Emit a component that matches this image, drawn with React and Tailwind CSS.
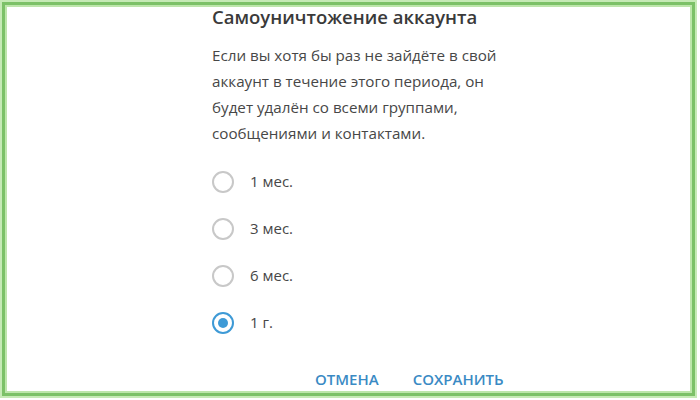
import React from 'react';

const options = [
  { label: '1 мес.', checked: false },
  { label: '3 мес.', checked: false },
  { label: '6 мес.', checked: false },
  { label: '1 г.', checked: true },
];

const Radio = ({ checked }) => (
  <div
    className={`w-[22px] h-[22px] rounded-full border-2 flex items-center justify-center shrink-0 ${
      checked ? 'border-[#3e9ad6]' : 'border-[#c8c8c8]'
    }`}
  >
    {checked && <div className="w-[10px] h-[10px] rounded-full bg-[#3e9ad6]" />}
  </div>
);

export default function App() {
  return (
    <div className="w-[700px] h-[400px] bg-white overflow-hidden" style={{ fontFamily: '"Open Sans", "Liberation Sans", sans-serif' }}>
      {/* Green frame */}
      <div className="w-[697px] h-[398px] bg-[#c6eab6] p-[2px]">
        <div className="w-full h-full bg-[#7cc168] p-[3px]">
          <div className="w-full h-full bg-[#bde6ab] p-[2px]">
            <div className="w-full h-full bg-white pl-[205px]">
              <div className="text-[18.5px] leading-[20px] font-semibold text-[#3a3a3a] whitespace-nowrap">
                Самоуничтожение аккаунта
              </div>
              <p className="mt-[15px] text-[15.2px] leading-[26px] text-[#474747] whitespace-nowrap">
                Если вы хотя бы раз не зайдёте в свой<br />
                аккаунт в течение этого периода, он<br />
                будет удалён со всеми группами,<br />
                сообщениями и контактами.
              </p>
              <div className="mt-[12px] flex flex-col">
                {options.map((o) => (
                  <div key={o.label} className="h-[47px] flex items-center gap-[16px]">
                    <Radio checked={o.checked} />
                    <span className="text-[15px] text-[#474747]">{o.label}</span>
                  </div>
                ))}
              </div>
              <div className="mt-[23px] pl-[103px] flex gap-[34px] text-[15px] leading-[20px] font-semibold text-[#3a8ac4]">
                <span>ОТМЕНА</span>
                <span>СОХРАНИТЬ</span>
              </div>
            </div>
          </div>
        </div>
      </div>
    </div>
  );
}
